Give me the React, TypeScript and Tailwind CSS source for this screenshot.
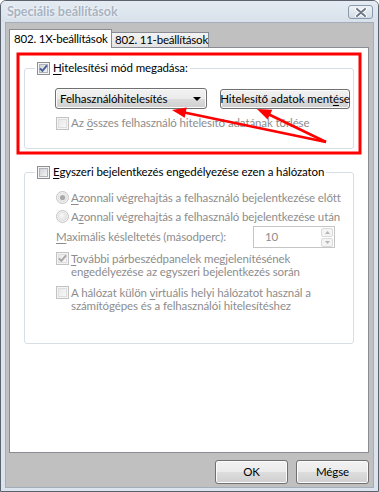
import React from "react";

function CheckBox({ id, checked = false, disabled = false }: { id: string; checked?: boolean; disabled?: boolean }) {
  return (
    <svg width="13" height="13" viewBox="0 0 13 13" className="shrink-0">
      <defs>
        <linearGradient id={id} x1="0" y1="0" x2="1" y2="1">
          <stop offset="0" stopColor={disabled ? "#e8e8e8" : "#cbcfd5"} />
          <stop offset="1" stopColor={disabled ? "#f8f8f8" : "#f7f7f7"} />
        </linearGradient>
      </defs>
      <rect x="0.5" y="0.5" width="12" height="12" fill="#f4f4f4" stroke={disabled ? "#c2c2c2" : "#8e8f8f"} />
      <rect x="2.5" y="2.5" width="8" height="8" fill={`url(#${id})`} stroke={disabled ? "#dedede" : "#b0b5bb"} />
      {checked && (
        <path d="M3 6.3 L5.4 8.8 L10 3.4" fill="none" stroke={disabled ? "#a6a6a6" : "#4a5f97"} strokeWidth="1.9" />
      )}
    </svg>
  );
}

function Radio({ id, selected = false }: { id: string; selected?: boolean }) {
  return (
    <svg width="13" height="13" viewBox="0 0 13 13" className="shrink-0">
      <defs>
        <radialGradient id={id} cx="0.4" cy="0.35" r="0.7">
          <stop offset="0" stopColor="#f8f8f8" />
          <stop offset="1" stopColor="#e2e2e2" />
        </radialGradient>
      </defs>
      <circle cx="6.5" cy="6.5" r="6" fill="#f2f2f2" stroke="#c4c4c4" />
      <circle cx="6.5" cy="6.5" r="4.2" fill={`url(#${id})`} stroke="#e0e0e0" strokeWidth="0.8" />
      {selected && <circle cx="6.5" cy="6.5" r="2.6" fill="#a9a9a9" />}
    </svg>
  );
}

function Key({ children }: { children: React.ReactNode }) {
  return <span className="underline underline-offset-[2px]">{children}</span>;
}

const btn =
  "flex items-center justify-center border border-[#707070] rounded-[3px] bg-[linear-gradient(#f2f2f2_0%,#ebebeb_50%,#dddddd_50%,#cfcfcf_100%)] shadow-[inset_0_0_0_1px_#fbfbfb]";

export default function App() {
  return (
    <div className="relative w-[379px] h-[492px] font-['Lato',sans-serif] text-[11.5px] tracking-[-0.1px] text-black whitespace-nowrap">
      <div className="w-full h-full flex flex-col bg-[#dbe4ee] border border-[#5c636c] rounded-t-[6px] overflow-hidden">
        {/* title bar */}
        <div className="h-[21px] shrink-0 flex items-start justify-between pl-[6px] pr-[5px] bg-[linear-gradient(#e4ebf2,#d8e1eb)]">
          <span className="mt-[3px] font-bold text-[12.5px] tracking-normal leading-[16px] text-[#a7b3c1] [text-shadow:0_0_3px_#ffffff]">
            Speciális beállítások
          </span>
          <div className="mt-[4px] w-[25px] h-[14px] border border-[#8a9aad] rounded-[3px] bg-[linear-gradient(#eef2f7,#d3dce6)] flex items-center justify-center">
            <svg width="12" height="9" viewBox="0 0 12 9">
              <path d="M2 1 L10 8 M10 1 L2 8" stroke="#ffffff" strokeWidth="4" strokeLinecap="round" />
              <path d="M2 1 L10 8 M10 1 L2 8" stroke="#6f7886" strokeWidth="2" strokeLinecap="round" />
            </svg>
          </div>
        </div>

        {/* body */}
        <div className="flex-1 mx-[4px] mb-[3px] bg-[#c0c0c0] border border-[#a4aeba] flex flex-col pt-[6px] pl-[3px] pr-[4px]">
          {/* tabs */}
          <div className="h-[18px] flex items-end">
            <div className="relative z-10 h-[19px] -mb-[1px] w-[103px] bg-white border border-b-0 border-[#898c95] pl-[4px] flex items-center leading-none tracking-[-0.2px]">
              802. 1X-beállítások
            </div>
            <div className="h-[15px] w-[97px] border border-l-0 border-b-0 border-[#898c95] bg-[linear-gradient(#f3f3f3,#e3e3e3)] pl-[3px] flex items-center leading-none tracking-[-0.2px]">
              802. 11-beállítások
            </div>
          </div>

          {/* panel */}
          <div className="h-[406px] bg-white border border-[#898c95] px-[14px]">
            <fieldset className="mt-[13px] h-[88px] border border-[#d5dfe5] rounded-[3px]">
              <legend className="ml-[10px] px-[2px] h-[14px] flex items-center gap-[3px] leading-none">
                <CheckBox id="c1" checked />
                <span>
                  <Key>H</Key>itelesítési mód megadása:
                </span>
              </legend>
              <div className="pt-[13px] pl-[30px]">
                <div className="flex items-start">
                  <div className={`${btn} w-[152px] h-[21px] !justify-between pl-[4px] pr-[5px]`}>
                    <span>Felhasználóhitelesítés</span>
                    <svg width="8" height="4" viewBox="0 0 8 4">
                      <path d="M0 0 H8 L4 4 Z" fill="#000" />
                    </svg>
                  </div>
                  <div className={`${btn} ml-[13px] mt-[1px] w-[130px] h-[20px]`}>
                    Hitelesítő adatok ment<Key>é</Key>se
                  </div>
                </div>
                <div className="mt-[6px] h-[16px] pl-[1px] flex items-center gap-[2px] text-[#8d8d8d]">
                  <CheckBox id="c2" disabled />
                  <span>
                    Az <Key>ö</Key>sszes felhasználó hitelesítő adatának törlése
                  </span>
                </div>
              </div>
            </fieldset>

            <fieldset className="mt-[16px] h-[179px] border border-[#d5dfe5] rounded-[3px]">
              <legend className="ml-[10px] px-[2px] h-[14px] flex items-center gap-[3px] leading-none">
                <CheckBox id="c3" />
                <span>
                  <Key>E</Key>gyszeri bejelentkezés engedélyezése ezen a hálózaton
                </span>
              </legend>
              <div className="pt-[9px] pl-[31px] text-[#8d8d8d]">
                <div className="h-[19px] flex items-center gap-[2px]">
                  <Radio id="r1" selected />
                  <span>
                    <Key>A</Key>zonnali végrehajtás a felhasználó bejelentkezése előtt
                  </span>
                </div>
                <div className="h-[19px] flex items-center gap-[2px]">
                  <Radio id="r2" />
                  <span>
                    A<Key>z</Key>onnali végrehajtás a felhasználó bejelentkezése után
                  </span>
                </div>
                <div className="h-[22px] flex items-center">
                  <span className="w-[197px]">
                    <Key>M</Key>aximális késleltetés (másodperc):
                  </span>
                  <div className="w-[82px] h-[22px] border border-[#c5c5c5] flex items-center justify-between pl-[11px] pr-[1px]">
                    <span>10</span>
                    <div className="flex flex-col gap-[1px]">
                      <div className="w-[12px] h-[9px] border border-[#dadada] rounded-[2px] bg-[#f4f4f4] flex items-center justify-center">
                        <svg width="5" height="3" viewBox="0 0 5 3">
                          <path d="M0 3 L2.5 0 L5 3 Z" fill="#b5b5b5" />
                        </svg>
                      </div>
                      <div className="w-[12px] h-[9px] border border-[#dadada] rounded-[2px] bg-[#f4f4f4] flex items-center justify-center">
                        <svg width="5" height="3" viewBox="0 0 5 3">
                          <path d="M0 0 L5 0 L2.5 3 Z" fill="#b5b5b5" />
                        </svg>
                      </div>
                    </div>
                  </div>
                </div>
                <div className="mt-[4px] flex items-start gap-[2px] leading-[13px]">
                  <CheckBox id="c4" checked disabled />
                  <span>
                    <Key>T</Key>ovábbi párbeszédpanelek megjelenítésének
                    <br />
                    engedélyezése az egyszeri bejelentkezés során
                  </span>
                </div>
                <div className="mt-[8px] flex items-start gap-[2px] leading-[13px]">
                  <CheckBox id="c5" disabled />
                  <span>
                    A hálózat külön <Key>v</Key>irtuális helyi hálózatot használ a
                    <br />
                    számítógépes és a felhasználói hitelesítéshez
                  </span>
                </div>
              </div>
            </fieldset>
          </div>

          {/* dialog buttons */}
          <div className="mt-[7px] flex justify-end gap-[8px]">
            <button className={`${btn} w-[73px] h-[24px]`}>OK</button>
            <button className={`${btn} w-[73px] h-[24px]`}>Mégse</button>
          </div>
        </div>
      </div>

      {/* red annotation */}
      <svg className="absolute left-0 top-0 pointer-events-none" width="379" height="492" viewBox="0 0 379 492">
        <rect x="18" y="54" width="342" height="99" fill="none" stroke="#ff0000" strokeWidth="3" />
        <path d="M326 142 L182 112" stroke="#ff0000" strokeWidth="2.5" />
        <polygon points="172,110 186.7,107.4 184.7,117.8" fill="#ff0000" />
        <path d="M326 142 L266 113" stroke="#ff0000" strokeWidth="2.5" />
        <polygon points="257,109 272.3,109.8 267.6,119.4" fill="#ff0000" />
      </svg>
    </div>
  );
}
